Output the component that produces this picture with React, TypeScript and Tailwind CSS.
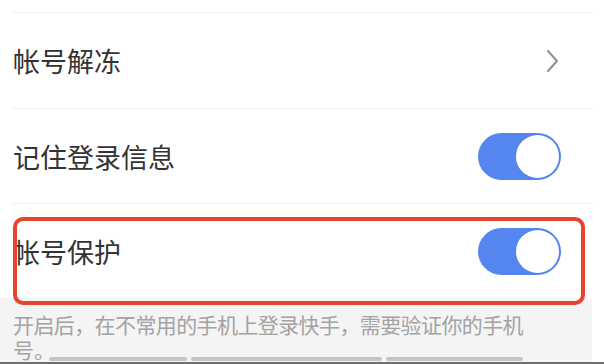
import React from "react";

function Toggle() {
  return (
    <div className="w-[83px] h-[47px] rounded-full bg-[#5585ef] flex items-center justify-end pr-[2px]">
      <div className="w-[43px] h-[43px] rounded-full bg-white" />
    </div>
  );
}

export default function App() {
  return (
    <div
      className="relative w-[604px] h-[364px] bg-white overflow-hidden"
      style={{ fontFamily: '"Noto Sans CJK SC", "Noto Sans", sans-serif' }}
    >
      <div className="h-[12px]" />
      <div className="pl-[13px] pr-[11px]">
        <div className="h-[96px] border-t border-[#efefef] flex items-center justify-between pr-[34px]">
          <span className="text-[27px] text-[#333333] leading-none">帐号解冻</span>
          <svg width="13" height="24" viewBox="0 0 13 24" fill="none">
            <polyline points="2,2 11,12 2,22" stroke="#8f8f8f" strokeWidth="2" strokeLinecap="round" strokeLinejoin="round" />
          </svg>
        </div>
        <div className="h-[95px] border-t border-[#efefef] flex items-center justify-between pr-[32px]">
          <span className="text-[27px] text-[#333333] leading-none">记住登录信息</span>
          <Toggle />
        </div>
        <div className="h-[95px] border-t border-[#efefef] flex items-center justify-between pr-[32px]">
          <span className="text-[27px] text-[#333333] leading-none">帐号保护</span>
          <Toggle />
        </div>
      </div>
      <div className="relative w-[592px] h-[64px] bg-[#f4f4f4] pl-[13px] pt-[16px] flex flex-col gap-[4px]">
        <div className="text-[21px] leading-[21px] text-[#a3a3a3] whitespace-nowrap tracking-[-0.6px]">
          开启后，在不常用的手机上登录快手，需要验证你的手机
        </div>
        <div className="text-[21px] leading-[21px] text-[#a3a3a3] whitespace-nowrap">号。</div>
        <div className="absolute left-[49px] top-[59px] flex gap-[4px]">
          <div className="w-[138px] h-[4px] rounded-full bg-[#c4c4c4]" />
          <div className="w-[191px] h-[4px] rounded-full bg-[#c4c4c4]" />
          <div className="w-[137px] h-[4px] rounded-full bg-[#c4c4c4]" />
        </div>
      </div>
      <div className="h-[2px] bg-[#6e6e6e]" />
      <div className="absolute left-[13px] top-[217px] w-[572px] h-[88px] border-[4px] border-[#e8432d] rounded-[10px]" />
    </div>
  );
}
